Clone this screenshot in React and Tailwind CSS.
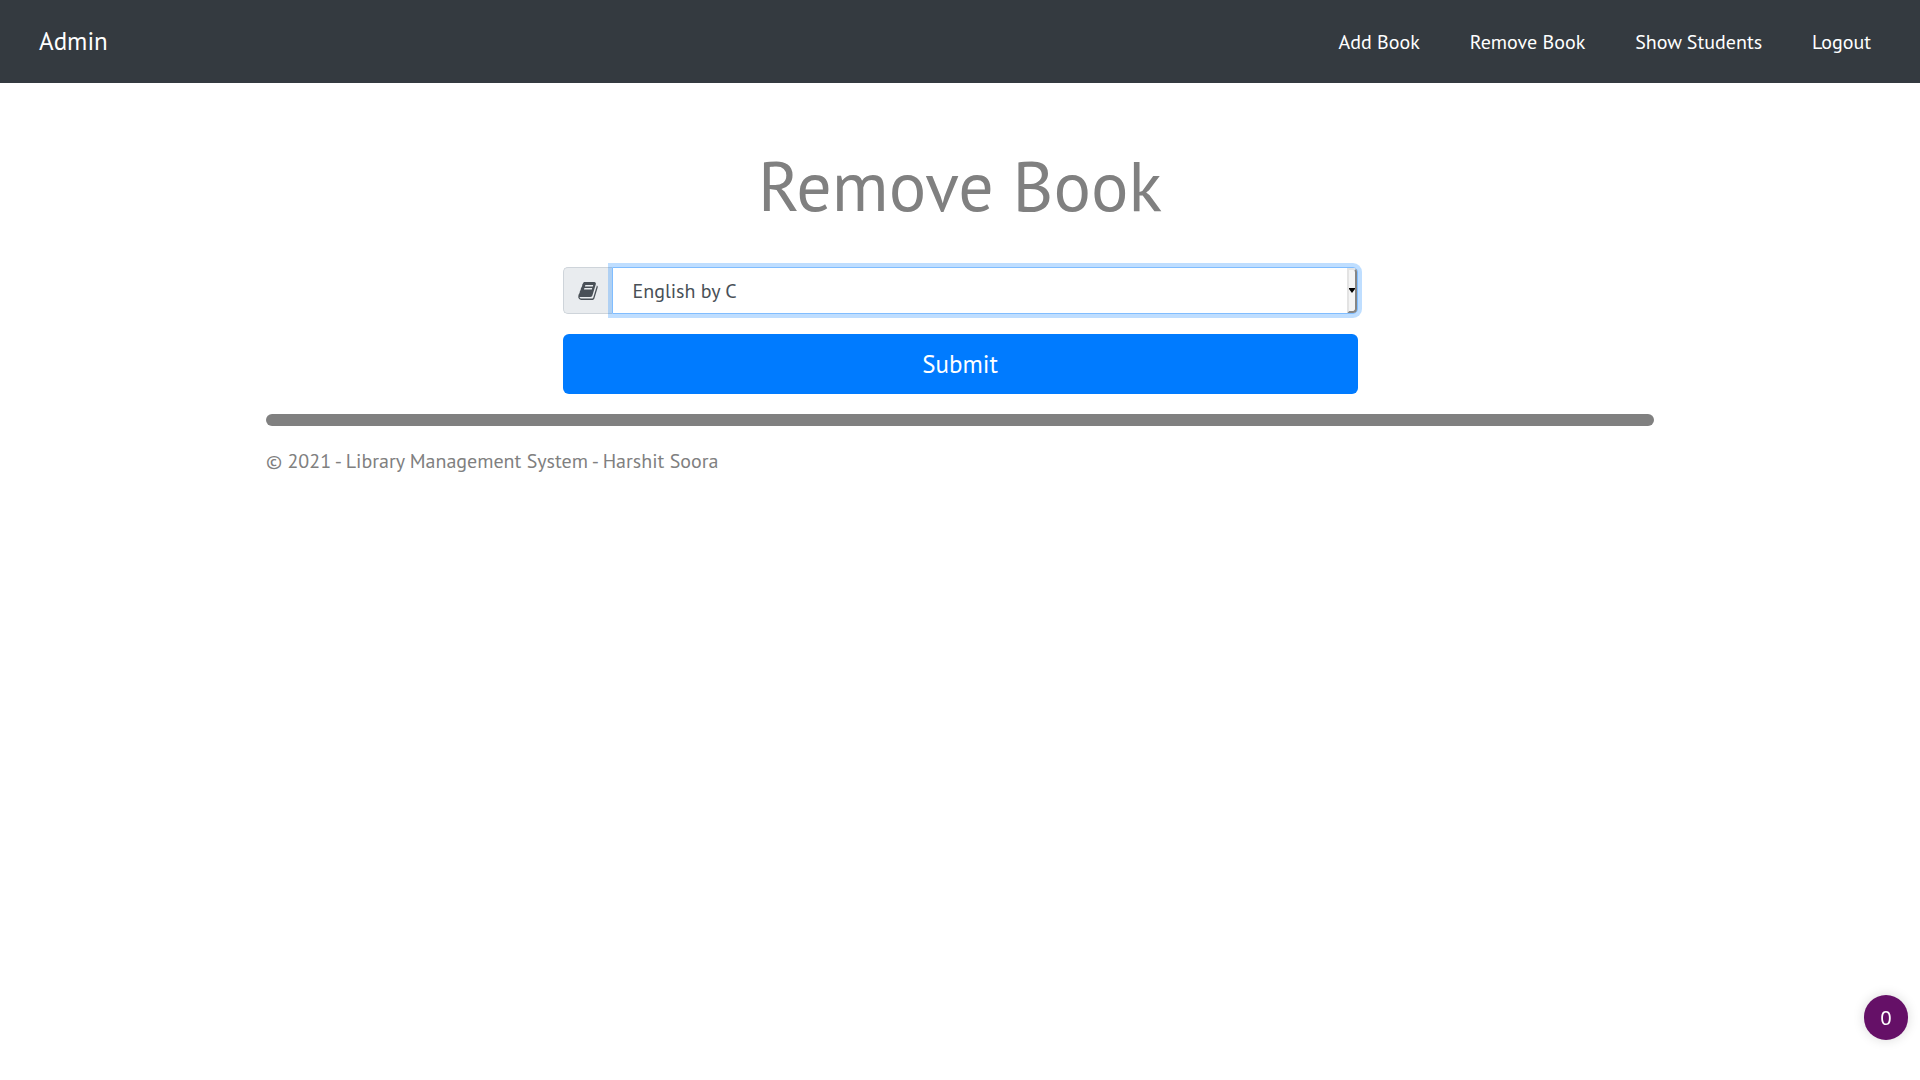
import React from "react";

const links = ["Add Book", "Remove Book", "Show Students", "Logout"];

function BookIcon() {
  return (
    <svg viewBox="0 0 1664 1536" className="h-[18px] w-[20px]" fill="currentColor" aria-hidden="true">
      <path d="M1639 350q40 57 18 129l-275 906q-19 64-76.500 107.500t-122.500 43.500h-923q-77 0-148.500-53.500t-99.500-131.500q-24-67-2-127 0-4 3-27t4-37q1-8-3-21.500t-3-19.500q2-11 8-21t16.500-23.500 16.500-23.500q23-38 45-91.500t30-91.500q3-10 .5-30t-.5-28q3-11 17-28t17-23q21-36 42-92t25-90q1-9-2.500-32t.5-28q4-13 22-30.500t22-22.500q19-26 42.500-84.500t27.500-96.500q1-8-3-25.500t-2-26.500q2-8 9-18t18-23 17-21q8-12 16.500-30.500t15-35 16-36 19.500-32 26.500-23.500 36-11.500 47.500 5.500l-1 3q38-9 51-9h761q74 0 114 56t18 130l-274 906q-36 119-71.500 153.500t-128.500 34.500h-869q-27 0-38 15-11 16-1 43 24 70 144 70h923q29 0 56-15.500t35-41.500l300-987q7-22 5-57 38 15 59 43zm-1064 2q-4 13 2 22.500t20 9.500h608q13 0 25.500-9.500t16.500-22.500l21-64q4-13-2-22.500t-20-9.500h-608q-13 0-25.500 9.500t-16.500 22.500zm-83 256q-4 13 2 22.500t20 9.500h608q13 0 25.500-9.500t16.500-22.500l21-64q4-13-2-22.500t-20-9.500h-608q-13 0-25.500 9.500t-16.500 22.500z" />
    </svg>
  );
}

export default function App() {
  return (
    <div className="min-h-screen bg-white font-['PT_Sans','Noto_Sans',sans-serif] text-xl text-[#808080]">
      <header className="flex h-[83px] items-center justify-between bg-[#343a40] pr-[49px] pl-[39px] text-white">
        <a href="#" className="text-[25px] leading-[39px]">Admin</a>
        <nav className="flex gap-[50px]">
          {links.map((label) => (
            <a key={label} href="#">{label}</a>
          ))}
        </nav>
      </header>

      <main className="mx-auto max-w-[1388px] pt-[60px]">
        <h1 className="text-center text-[70px] leading-[84px]">Remove Book</h1>
        <form className="mx-auto mt-10 max-w-[795px]" onSubmit={(e) => e.preventDefault()}>
          <div className="flex h-[47px]">
            <label
              htmlFor="book"
              aria-label="Book"
              className="flex w-[49px] items-center justify-center rounded-l-[5px] border border-r-0 border-[#ced4da] bg-[#e9ecef] text-[#495057]"
            >
              <BookIcon />
            </label>
            <div className="relative flex-1">
              <select
                id="book"
                className="h-full w-full appearance-none rounded-r-[5px] border border-[#80bdff] bg-white px-5 text-[#495057] ring-4 ring-[#007bff]/25 outline-none"
              >
                <option>English by C</option>
              </select>
              <span className="pointer-events-none absolute inset-y-px right-px flex w-[10px] items-center justify-center rounded-r-[4px] border-2 border-t-[#e3e3e3] border-r-[#858585] border-b-[#858585] border-l-[#e3e3e3] bg-[#f4f4f4]">
                <svg viewBox="0 0 6 5" className="h-[5px] w-[6px] shrink-0" aria-hidden="true">
                  <path d="M0 0h6v1L3 5 0 1z" fill="#000" />
                </svg>
              </span>
            </div>
          </div>
          <button type="submit" className="mt-5 h-[60px] w-full rounded-[6px] bg-[#007bff] text-[25px] text-white">
            Submit
          </button>
        </form>
        <hr className="mt-5 h-3 rounded-full border-0 bg-[#808080]" />
        <footer className="mt-5 leading-[30px]">© 2021 - Library Management System - Harshit Soora</footer>
      </main>

      <button
        type="button"
        className="fixed right-3 bottom-10 flex h-[45px] w-11 items-center justify-center rounded-full bg-[#651067] font-['Noto_Sans',sans-serif] text-white shadow-[0_0_12px_rgba(0,0,0,0.15)]"
      >
        0
      </button>
    </div>
  );
}
